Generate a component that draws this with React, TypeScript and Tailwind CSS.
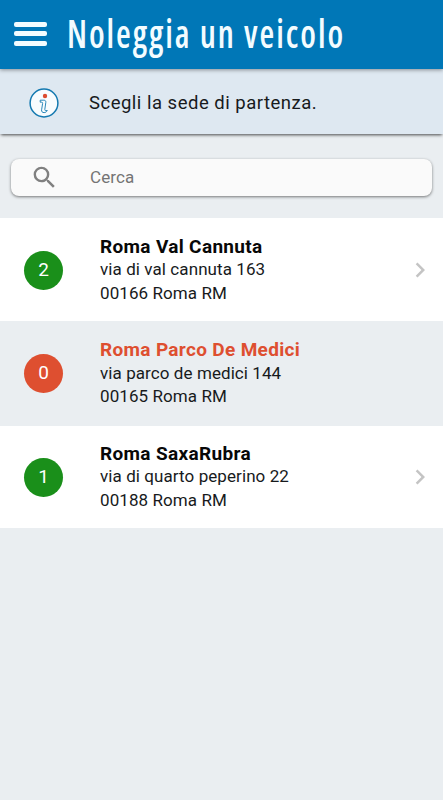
import { MdChevronRight, MdSearch } from 'react-icons/md';

const locations = [
  { name: 'Roma Val Cannuta', street: 'via di val cannuta 163', city: '00166 Roma RM', available: 2 },
  { name: 'Roma Parco De Medici', street: 'via parco de medici 144', city: '00165 Roma RM', available: 0 },
  { name: 'Roma SaxaRubra', street: 'via di quarto peperino 22', city: '00188 Roma RM', available: 1 },
];

function InfoIcon() {
  return (
    <svg width="30" height="30" viewBox="0 0 30 30" fill="none">
      <circle cx="15" cy="15" r="13.9" fill="#f8fcfe" stroke="#1479b0" strokeWidth="1.5" />
      <circle cx="16" cy="8" r="2.2" fill="#dc4c30" />
      <path
        d="M11.2 12.2h3.6c1.5 0 2.2.8 2 2.3l-1 7c-.1.9.4 1.3 1.3 1h1.2c-.7 1.4-1.8 2.1-3.2 2.1-1.9 0-2.7-1-2.5-2.8l1-6.3c.1-1-.3-1.4-1.3-1.3h-1.1Z"
        stroke="#1479b0"
        strokeWidth="0.9"
        strokeLinejoin="round"
      />
    </svg>
  );
}

export default function App() {
  return (
    <div className="min-h-screen bg-[#eaeef1] font-['Roboto',sans-serif] text-[#171a1c]">
      <header className="relative z-10 flex h-[69px] items-center bg-[#0077b7] pb-[2px] pl-[14px] shadow-[0_1px_4px_rgba(0,0,0,0.4)]">
        <button aria-label="Menu" className="flex w-[33px] flex-col gap-[4.5px]">
          <span className="h-[5px] w-full rounded-[2px] bg-[#f3fcff]" />
          <span className="h-[5px] w-full rounded-[2px] bg-[#f3fcff]" />
          <span className="h-[5px] w-full rounded-[2px] bg-[#f3fcff]" />
        </button>
        <h1 className="ml-[19.5px] origin-left scale-x-[0.855] whitespace-nowrap font-['Open_Sans',sans-serif] text-[39.5px] leading-[67px] font-[560] tracking-[2.3px] text-[#f3fcff] [font-stretch:75%]">
          Noleggia un veicolo
        </h1>
      </header>

      <div className="flex h-[65px] items-center bg-[#dee8f1] pt-[2px] pl-[29px] shadow-[0_2px_3px_-1px_rgba(0,0,0,0.7)]">
        <InfoIcon />
        <p className="ml-[30px] pt-[2px] text-[18.5px] tracking-[0.5px]">Scegli la sede di partenza.</p>
      </div>

      <div className="px-[11px] pt-[25px] pb-[22px]">
        <div className="flex h-[37px] items-center rounded-[8px] bg-[#fafafa] pl-[18.5px] shadow-[0_1px_3px_rgba(0,0,0,0.5)]">
          <MdSearch size={29} className="text-[#808080]" />
          <input
            placeholder="Cerca"
            className="ml-[31.5px] w-64 text-[17px] tracking-[0.1px] outline-none placeholder:text-[#747474]"
          />
        </div>
      </div>

      <ul>
        {locations.map((loc) => (
          <li
            key={loc.name}
            className={
              loc.available > 0
                ? 'flex h-[103px] items-center bg-white pt-px pl-6 last:h-[102px] last:pt-0'
                : 'flex h-[105px] items-center pl-6'
            }
          >
            <span
              className={
                loc.available > 0
                  ? 'flex size-[39px] items-center justify-center rounded-full bg-[#1a8f1a] text-[19px] text-white'
                  : 'flex size-[39px] items-center justify-center rounded-full bg-[#de4f30] text-[19px] text-white'
              }
            >
              {loc.available}
            </span>
            <div className="ml-[37px] flex-1 text-[17px] leading-[23.4px] tracking-[0.08px]">
              <h2
                className={
                  loc.available > 0
                    ? 'text-[19px] font-bold tracking-[0.33px] text-[#080808]'
                    : 'text-[19px] font-bold tracking-[0.33px] text-[#de4f30]'
                }
              >
                {loc.name}
              </h2>
              <p>{loc.street}</p>
              <p>{loc.city}</p>
            </div>
            {loc.available > 0 && <MdChevronRight size={30} className="mr-[8px] text-[#c4c4c4]" />}
          </li>
        ))}
      </ul>
    </div>
  );
}
